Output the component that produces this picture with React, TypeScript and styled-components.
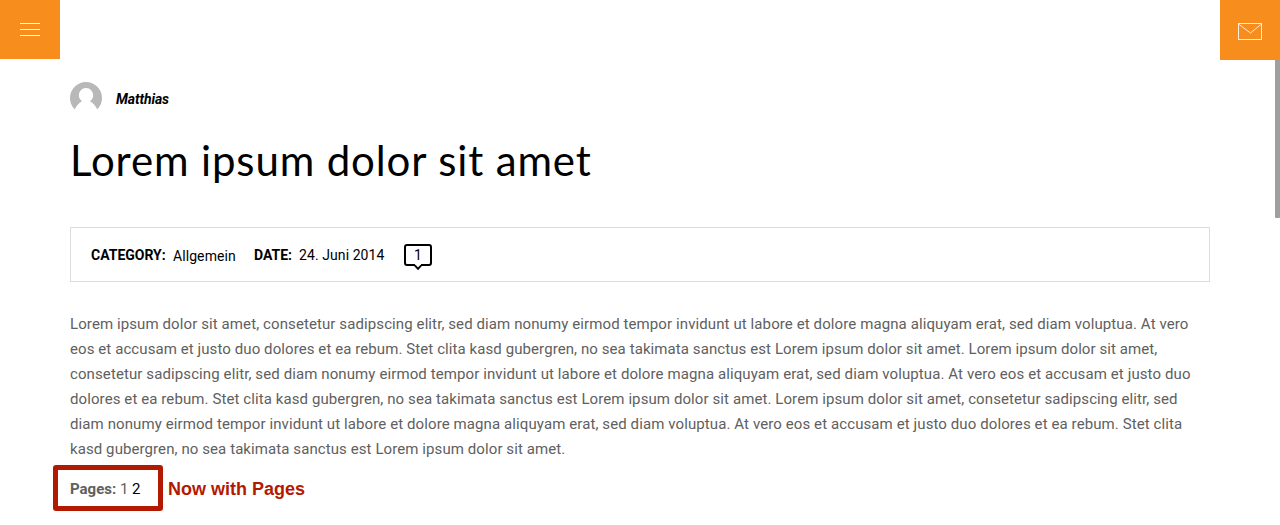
import React from "react";
import styled, { createGlobalStyle } from "styled-components";

const GlobalStyle = createGlobalStyle`
  * { box-sizing: border-box; }
  body { margin: 0; background: #fff; overflow: hidden; font-family: Roboto, "Liberation Sans", sans-serif; }
`;

const Page = styled.div`
  position: relative;
  height: 525px;
  overflow: hidden;
`;

const TopBar = styled.header`
  display: flex;
  justify-content: space-between;
  align-items: flex-start;
  height: 60px;
`;

const SquareButton = styled.button<{ $height: number }>`
  display: block;
  width: 60px;
  height: ${(p) => p.$height}px;
  padding: 0;
  border: 0;
  background: #f78d1c;
  svg { display: block; width: 100%; height: 100%; }
`;

const ScrollThumb = styled.div`
  position: absolute;
  top: 60px;
  right: 0;
  width: 5px;
  height: 158px;
  border-radius: 0 0 1px 1px;
  background: #9f9f9f;
`;

const Article = styled.main`
  padding: 22px 70px 0;
`;

const Author = styled.div`
  display: flex;
  align-items: center;
  gap: 14px;
  height: 32px;
  font-size: 14px;
  font-weight: 700;
  font-style: italic;
  color: #000;
  svg { display: block; }
  span { padding-top: 2px; letter-spacing: -0.1px; }
`;

const Title = styled.h1`
  margin: 16px 0 0;
  height: 61px;
  line-height: 60px;
  font-family: Lato, "Open Sans", sans-serif;
  font-size: 42px;
  font-weight: 400;
  letter-spacing: 0.87px;
  white-space: nowrap;
  color: #000;
`;

const MetaBar = styled.div`
  display: flex;
  align-items: center;
  margin-top: 36px;
  height: 55px;
  padding: 0 20px;
  border: 1px solid #dcdcdc;
  font-size: 14px;
  line-height: 20px;
  color: #000;
  white-space: nowrap;
`;

const MetaLabel = styled.strong<{ $width: number }>`
  width: ${(p) => p.$width}px;
  font-weight: 700;
`;

const MetaValue = styled.span<{ $width: number; $drop?: number }>`
  width: ${(p) => p.$width}px;
  padding-top: ${(p) => p.$drop ?? 0}px;
  letter-spacing: 0.08px;
`;

const CommentCount = styled.span`
  position: relative;
  width: 28px;
  height: 22px;
  border: 2px solid #000;
  border-radius: 3px;
  text-align: center;
  line-height: 18px;
  svg { position: absolute; left: 8px; top: 17px; }
`;

const Body = styled.p`
  margin: 30px 0 0;
  font-size: 15px;
  line-height: 25px;
  color: #606060;
  white-space: nowrap;
`;

const Line = styled.span<{ $spacing: number }>`
  display: block;
  letter-spacing: ${(p) => p.$spacing}px;
`;

const PagesRow = styled.div`
  display: flex;
  align-items: center;
  gap: 5px;
  margin: 3px 0 0 -17px;
`;

const PagesFrame = styled.nav`
  width: 110px;
  height: 46px;
  padding-left: 12px;
  border: 5px solid #b31900;
  border-radius: 3px;
  line-height: 38px;
  font-size: 15px;
  color: #606060;
  white-space: nowrap;
  a { color: #000; }
`;

const Note = styled.span`
  padding-top: 2px;
  font-family: "Liberation Sans", sans-serif;
  font-size: 18px;
  font-weight: 700;
  color: #b31900;
`;

const lines: [string, number][] = [
  ["Lorem ipsum dolor sit amet, consetetur sadipscing elitr, sed diam nonumy eirmod tempor invidunt ut labore et dolore magna aliquyam erat, sed diam voluptua. At vero", 0.1],
  ["eos et accusam et justo duo dolores et ea rebum. Stet clita kasd gubergren, no sea takimata sanctus est Lorem ipsum dolor sit amet. Lorem ipsum dolor sit amet,", 0.086],
  ["consetetur sadipscing elitr, sed diam nonumy eirmod tempor invidunt ut labore et dolore magna aliquyam erat, sed diam voluptua. At vero eos et accusam et justo duo", 0.104],
  ["dolores et ea rebum. Stet clita kasd gubergren, no sea takimata sanctus est Lorem ipsum dolor sit amet. Lorem ipsum dolor sit amet, consetetur sadipscing elitr, sed", 0.094],
  ["diam nonumy eirmod tempor invidunt ut labore et dolore magna aliquyam erat, sed diam voluptua. At vero eos et accusam et justo duo dolores et ea rebum. Stet clita", 0.1],
  ["kasd gubergren, no sea takimata sanctus est Lorem ipsum dolor sit amet.", 0.088],
];

export default function App() {
  return (
    <Page>
      <GlobalStyle />
      <TopBar>
        <SquareButton $height={59} aria-label="Menu">
          <svg viewBox="0 0 60 59">
            <path d="M20 23.5h20M20 29.5h20M20 35.5h20" stroke="#fff" />
          </svg>
        </SquareButton>
        <SquareButton $height={60} aria-label="Mail">
          <svg viewBox="0 0 60 60" fill="none" stroke="#fff" strokeOpacity=".85">
            <rect x="18.5" y="23.5" width="23" height="16" />
            <path d="M18.5 24l12 9 11-9" />
          </svg>
        </SquareButton>
      </TopBar>
      <ScrollThumb />
      <Article>
        <Author>
          <svg width="32" height="32" viewBox="0 0 32 32">
            <circle cx="16" cy="16" r="16" fill="#b8b8b8" />
            <path d="M4.500 28C6.500 23.500 8.500 21 12 19.200A7.200 7.200 0 1 1 20 19.200C23.500 21 25.500 23.500 27.500 28V32H4.500Z" fill="#fff" />
          </svg>
          <span>Matthias</span>
        </Author>
        <Title>Lorem ipsum dolor sit amet</Title>
        <MetaBar>
          <MetaLabel $width={82}>CATEGORY:</MetaLabel>
          <MetaValue $width={81} $drop={2}>Allgemein</MetaValue>
          <MetaLabel $width={45}>DATE:</MetaLabel>
          <MetaValue $width={105}>24. Juni 2014</MetaValue>
          <CommentCount>
            1
            <svg width="8" height="8" viewBox="0 0 8 8">
              <path d="M1 .5h6v2L4 5 1 2.500Z" fill="#fff" />
              <path d="M.8 2.300L4 5.800 7.200 2.300" fill="none" stroke="#000" strokeWidth="1.900" />
            </svg>
          </CommentCount>
        </MetaBar>
        <Body>
          {lines.map(([text, spacing]) => (
            <Line key={text} $spacing={spacing}>{text}</Line>
          ))}
        </Body>
        <PagesRow>
          <PagesFrame>
            <strong>Pages:</strong> 1 <a>2</a>
          </PagesFrame>
          <Note>Now with Pages</Note>
        </PagesRow>
      </Article>
    </Page>
  );
}
